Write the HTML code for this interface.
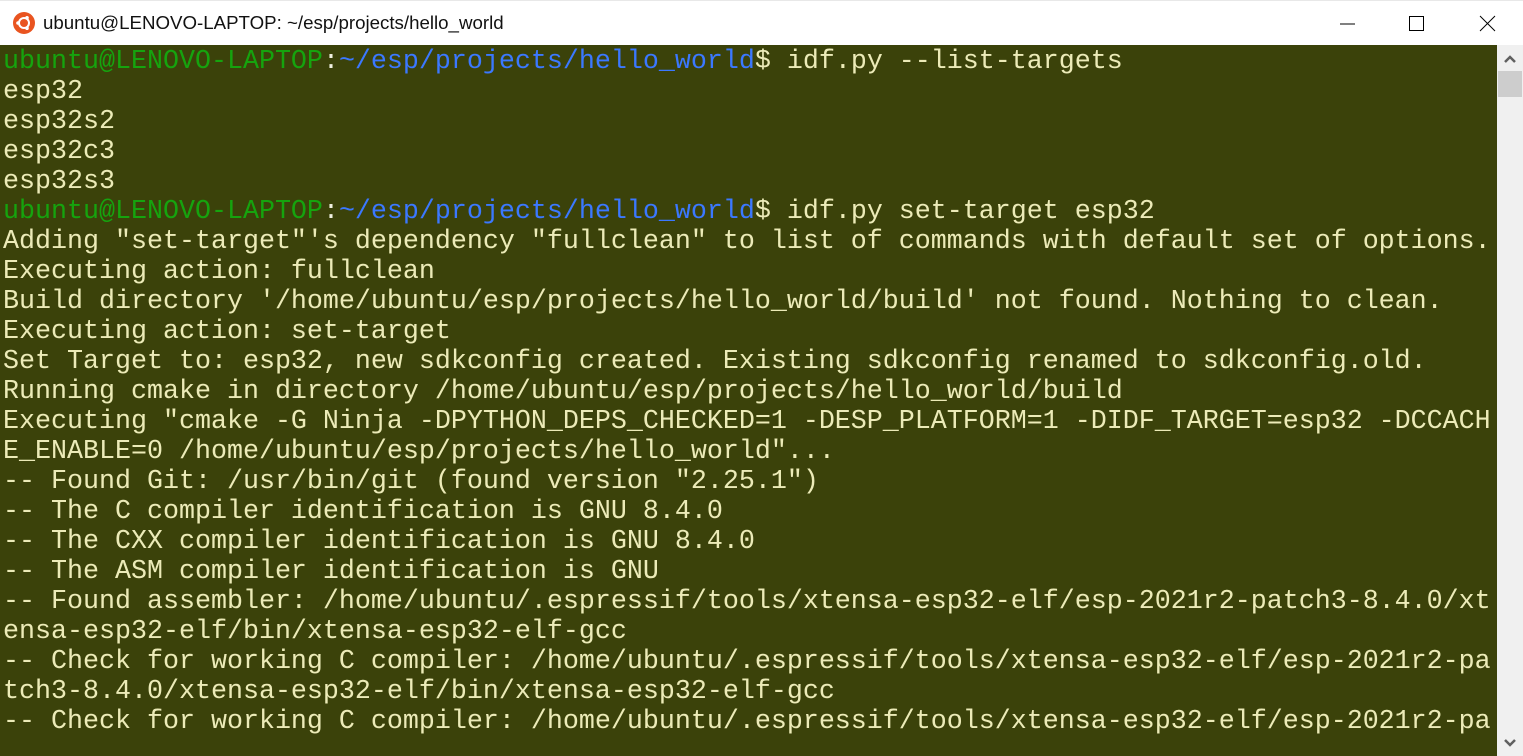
<!DOCTYPE html>
<html><head><meta charset="utf-8"><style>
html,body{margin:0;padding:0;width:1523px;height:756px;overflow:hidden;background:#fff;}
.title{position:absolute;left:0;top:0;width:1523px;height:44px;background:#fff;border-top:1px solid #e8e8e8;box-sizing:border-box;}
.title .t{position:absolute;left:43px;top:11px;font:18.7px "Liberation Sans",sans-serif;color:#111;}
.logo{position:absolute;left:13px;top:11px;width:22px;height:22px;border-radius:50%;background:#e95420;}
.term{position:absolute;left:0;top:45px;width:1497px;height:711px;background:#3b420a;}
pre{margin:0;position:absolute;left:3px;top:2px;font:26.67px/30px "Liberation Mono",monospace;color:#ecebb8;white-space:pre;}
.g{color:#16a30e}.b{color:#3b78ff}.w{color:#f0f0e0}
.sb{position:absolute;left:1497px;top:45px;width:26px;height:711px;background:#f0f0f0;}
.thumb{position:absolute;left:1px;top:26px;width:24px;height:26px;background:#cdcdcd;}
</style></head><body>
<div class="title">
<div class="logo"><svg width="22" height="22" viewBox="0 0 22 22"><circle cx="11" cy="11" r="5" fill="none" stroke="#fff" stroke-width="2"/><circle cx="5" cy="11" r="1.8" fill="#fff"/><circle cx="14" cy="5.8" r="1.8" fill="#fff"/><circle cx="14" cy="16.2" r="1.8" fill="#fff"/></svg></div>
<div class="t">ubuntu@LENOVO-LAPTOP: ~/esp/projects/hello_world</div>
<svg style="position:absolute;left:1340px;top:14px" width="170" height="18">
<line x1="0" y1="9" x2="15" y2="9" stroke="#000" stroke-width="1"/>
<rect x="69.5" y="1.5" width="14" height="14" fill="none" stroke="#000"/>
<line x1="140" y1="1" x2="155" y2="16" stroke="#000"/><line x1="155" y1="1" x2="140" y2="16" stroke="#000"/>
</svg>
</div>
<div class="term"><pre><span class="g">ubuntu@LENOVO-LAPTOP</span><span class="w">:</span><span class="b">~/esp/projects/hello_world</span>$ idf.py --list-targets
esp32
esp32s2
esp32c3
esp32s3
<span class="g">ubuntu@LENOVO-LAPTOP</span><span class="w">:</span><span class="b">~/esp/projects/hello_world</span>$ idf.py set-target esp32
Adding "set-target"'s dependency "fullclean" to list of commands with default set of options.
Executing action: fullclean
Build directory '/home/ubuntu/esp/projects/hello_world/build' not found. Nothing to clean.
Executing action: set-target
Set Target to: esp32, new sdkconfig created. Existing sdkconfig renamed to sdkconfig.old.
Running cmake in directory /home/ubuntu/esp/projects/hello_world/build
Executing "cmake -G Ninja -DPYTHON_DEPS_CHECKED=1 -DESP_PLATFORM=1 -DIDF_TARGET=esp32 -DCCACH
E_ENABLE=0 /home/ubuntu/esp/projects/hello_world"...
-- Found Git: /usr/bin/git (found version "2.25.1")
-- The C compiler identification is GNU 8.4.0
-- The CXX compiler identification is GNU 8.4.0
-- The ASM compiler identification is GNU
-- Found assembler: /home/ubuntu/.espressif/tools/xtensa-esp32-elf/esp-2021r2-patch3-8.4.0/xt
ensa-esp32-elf/bin/xtensa-esp32-elf-gcc
-- Check for working C compiler: /home/ubuntu/.espressif/tools/xtensa-esp32-elf/esp-2021r2-pa
tch3-8.4.0/xtensa-esp32-elf/bin/xtensa-esp32-elf-gcc
-- Check for working C compiler: /home/ubuntu/.espressif/tools/xtensa-esp32-elf/esp-2021r2-pa</pre></div>
<div class="sb"><div class="thumb"></div>
<svg style="position:absolute;left:7px;top:10px" width="12" height="8"><path d="M1 7 L6 2 L11 7" fill="none" stroke="#606060" stroke-width="2.5"/></svg>
<svg style="position:absolute;left:7px;top:694px" width="12" height="8"><path d="M1 1 L6 6 L11 1" fill="none" stroke="#606060" stroke-width="2.5"/></svg>
</div>
</body></html>
